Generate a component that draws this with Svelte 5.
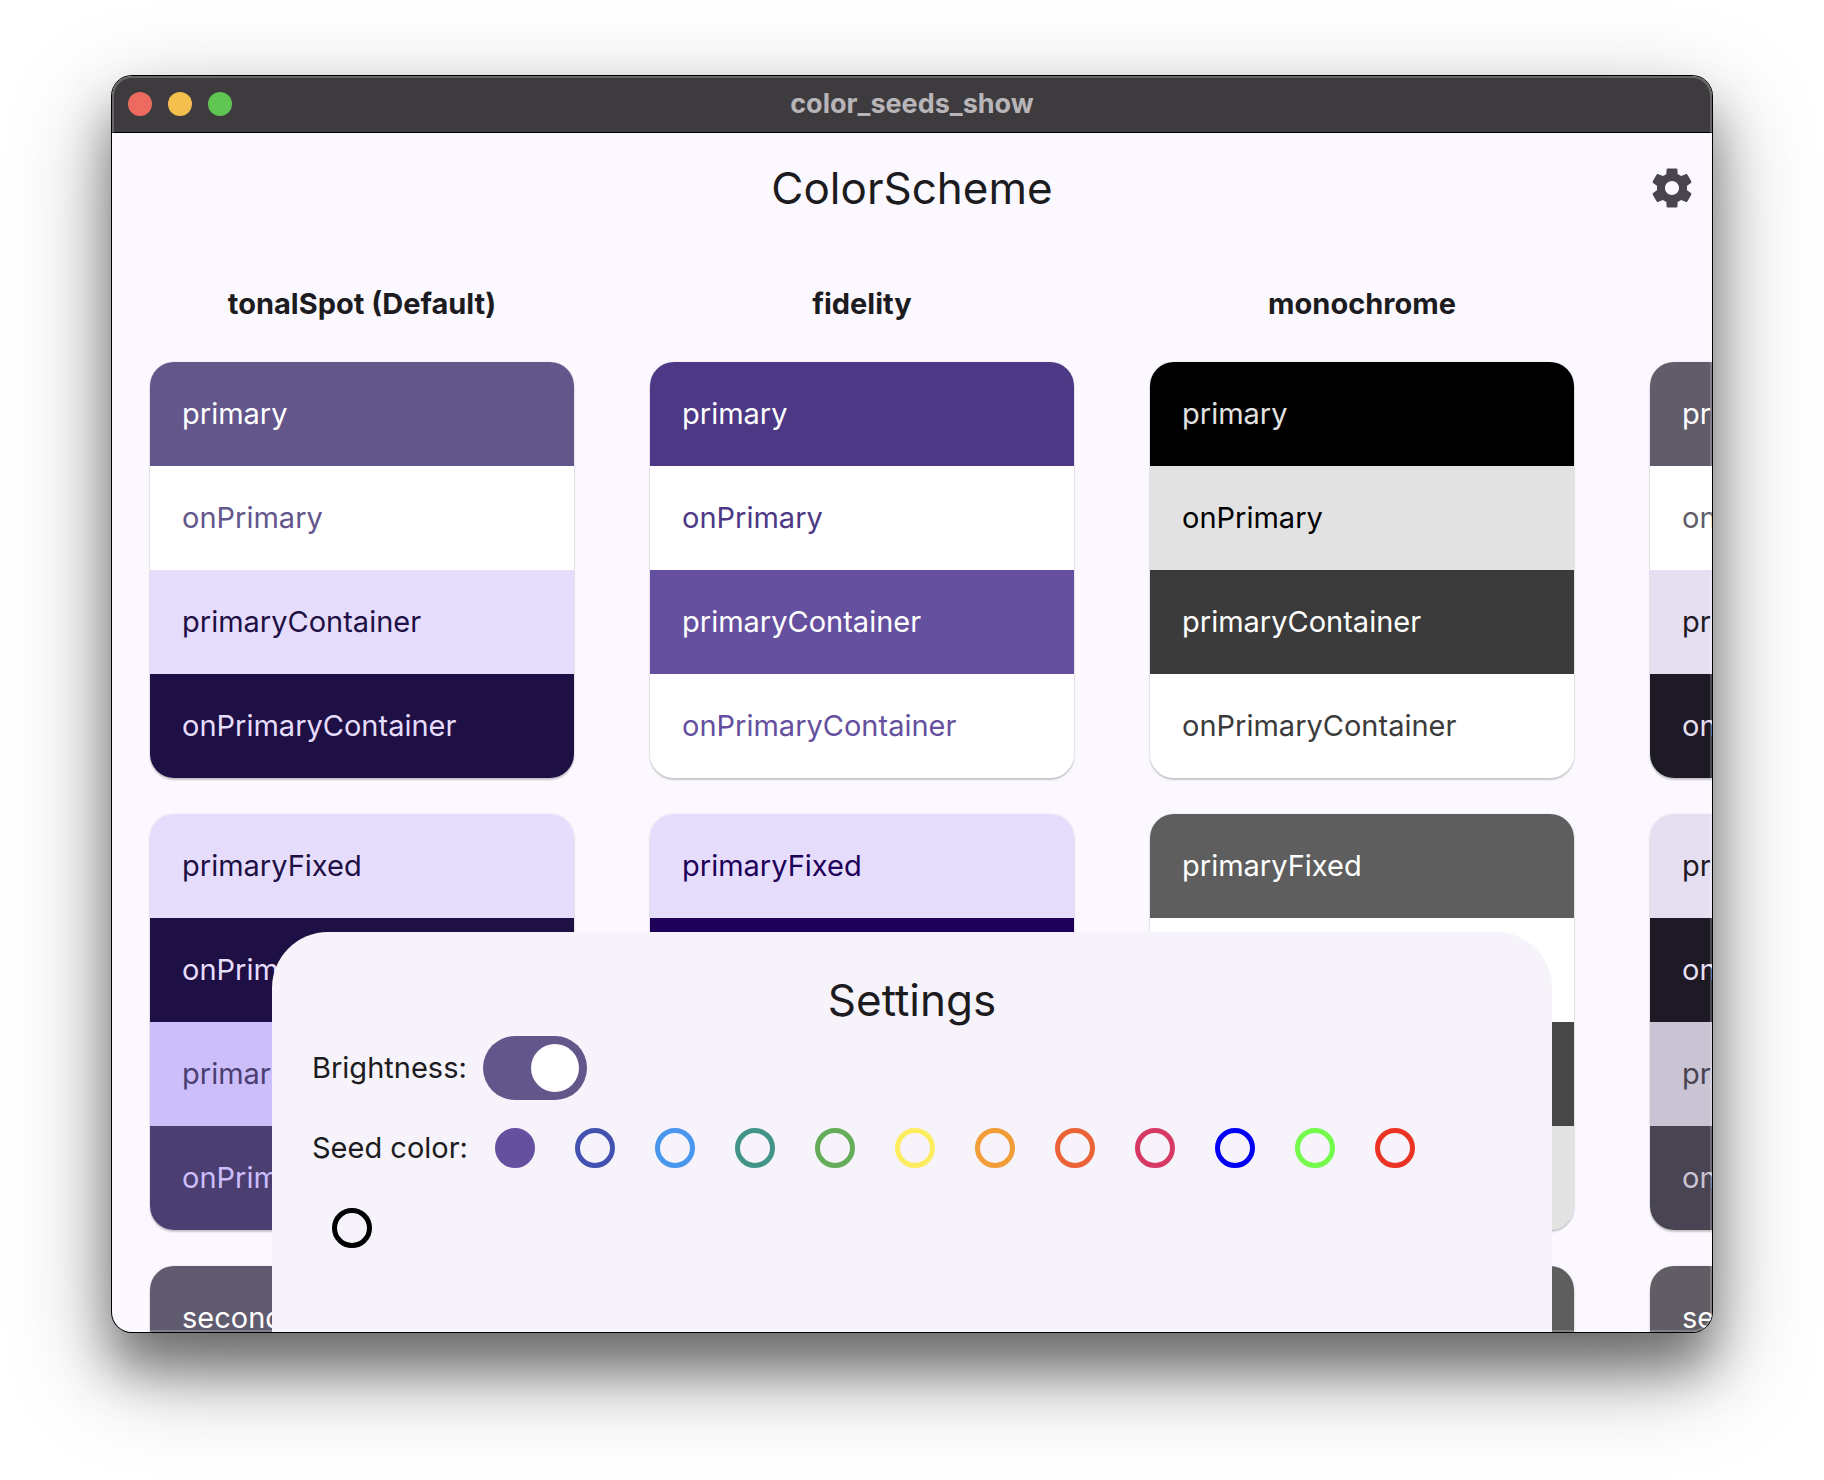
<script>
  const roles = ['primary', 'onPrimary', 'primaryContainer', 'onPrimaryContainer'];
  const fixedRoles = ['primaryFixed', 'onPrimaryFixed', 'primaryFixedDim', 'onPrimaryFixedVariant'];
  const secondaryRoles = ['secondary', 'onSecondary', 'secondaryContainer', 'onSecondaryContainer'];

  const group = (names, pairs) => names.map((name, i) => ({ name, bg: pairs[i][0], fg: pairs[i][1] }));

  const schemes = [
    {
      title: 'tonalSpot (Default)',
      groups: [
        group(roles, [['#63568b', '#ffffff'], ['#ffffff', '#63568b'], ['#e6ddfd', '#1e1044'], ['#1e1044', '#e6ddfd']]),
        group(fixedRoles, [['#e6ddfd', '#1e1044'], ['#1e1044', '#e6ddfd'], ['#ccbefa', '#4b3f71'], ['#4b3f71', '#ccbefa']]),
        group(secondaryRoles, [['#615b70', '#ffffff'], ['#ffffff', '#615b70'], ['#e7def8', '#1d192b'], ['#1d192b', '#e7def8']])
      ]
    },
    {
      title: 'fidelity',
      groups: [
        group(roles, [['#4c3885', '#ffffff'], ['#ffffff', '#4c3885'], ['#64509e', '#ffffff'], ['#ffffff', '#64509e']]),
        group(fixedRoles, [['#e6ddfd', '#1e0058'], ['#1e0058', '#e6ddfd'], ['#ccbdff', '#4b3784'], ['#4b3784', '#ccbdff']]),
        group(secondaryRoles, [['#615789', '#ffffff'], ['#ffffff', '#615789'], ['#d5c8ff', '#41376a'], ['#41376a', '#d5c8ff']])
      ]
    },
    {
      title: 'monochrome',
      groups: [
        group(roles, [['#000000', '#e2e2e2'], ['#e2e2e2', '#000000'], ['#3b3b3b', '#ffffff'], ['#ffffff', '#3b3b3b']]),
        group(fixedRoles, [['#5e5e5e', '#ffffff'], ['#ffffff', '#5e5e5e'], ['#474747', '#e2e2e2'], ['#e2e2e2', '#474747']]),
        group(secondaryRoles, [['#5e5e5e', '#ffffff'], ['#ffffff', '#5e5e5e'], ['#d5d5d5', '#1b1b1b'], ['#1b1b1b', '#d5d5d5']])
      ]
    },
    {
      title: 'neutral',
      groups: [
        group(roles, [['#605c6a', '#ffffff'], ['#ffffff', '#605c6a'], ['#e6dff1', '#1d1a26'], ['#1d1a26', '#e6dff1']]),
        group(fixedRoles, [['#e6dff1', '#1d1a26'], ['#1d1a26', '#e6dff1'], ['#cac3d4', '#484452'], ['#484452', '#cac3d4']]),
        group(secondaryRoles, [['#605d64', '#ffffff'], ['#ffffff', '#605d64'], ['#e6e0e9', '#1d1b20'], ['#1d1b20', '#e6e0e9']])
      ]
    }
  ];

  const seeds = [
    ['M3 baseline', '#64509e'],
    ['Indigo', '#4352b0'],
    ['Blue', '#4896ee'],
    ['Teal', '#429488'],
    ['Green', '#65ad5b'],
    ['Yellow', '#fdec60'],
    ['Orange', '#f29d38'],
    ['Deep orange', '#ec6337'],
    ['Pink', '#d73965'],
    ['Bright blue', '#0000f5'],
    ['Bright green', '#75fb4c'],
    ['Bright red', '#ea3323'],
    ['Black', '#000000']
  ];

  let seed = $state('#64509e');
  let light = $state(true);
  let sheetOpen = $state(true);
</script>

<div class="desktop">
  <div class="window">
    <header class="titlebar">
      <div class="lights">
        <button class="light close" aria-label="Close"></button>
        <button class="light minimize" aria-label="Minimize"></button>
        <button class="light zoom" aria-label="Zoom"></button>
      </div>
      <span class="window-title">color_seeds_show</span>
    </header>

    <div class="appbar">
      <h1>ColorScheme</h1>
      <button class="icon-button" aria-label="Settings" onclick={() => (sheetOpen = !sheetOpen)}>
        <svg viewBox="0 0 24 24" width="48" height="48" aria-hidden="true">
          <path d="M19.43 12.98c.04-.32.07-.64.07-.98s-.03-.66-.07-.98l2.11-1.65c.19-.15.24-.42.12-.64l-2-3.46c-.12-.22-.39-.3-.61-.22l-2.49 1c-.52-.4-1.08-.73-1.69-.98l-.19-2.47c-.02-.2-.18-.35-.38-.35h-4.6c-.2 0-.36.15-.38.35l-.19 2.47c-.61.25-1.17.59-1.69.98l-2.49-1c-.23-.09-.49 0-.61.22l-2 3.46c-.13.22-.07.49.12.64l2.11 1.65c-.04.32-.07.65-.07.98s.03.66.07.98l-2.11 1.65c-.19.15-.24.42-.12.64l2 3.46c.12.22.39.3.61.22l2.49-1c.52.4 1.08.73 1.69.98l.19 2.47c.02.2.18.35.38.35h4.6c.2 0 .36-.15.38-.35l.19-2.47c.61-.25 1.17-.59 1.69-.98l2.49 1c.23.09.49 0 .61-.22l2-3.46c.12-.22.07-.49-.12-.64l-2.11-1.65zM12 15.5c-1.93 0-3.5-1.57-3.5-3.5s1.57-3.5 3.5-3.5 3.5 1.57 3.5 3.5-1.57 3.5-3.5 3.5z" />
        </svg>
      </button>
    </div>

    <main class="columns">
      {#each schemes as scheme}
        <section class="column">
          <h2>{scheme.title}</h2>
          {#each scheme.groups as rows}
            <ul class="card">
              {#each rows as row}
                <li style="background: {row.bg}; color: {row.fg}">{row.name}</li>
              {/each}
            </ul>
          {/each}
        </section>
      {/each}
    </main>

    {#if sheetOpen}
      <section class="sheet" aria-labelledby="sheet-title">
        <h2 id="sheet-title">Settings</h2>
        <div class="setting">
          <label class="name" for="brightness">Brightness:</label>
          <input id="brightness" class="switch" type="checkbox" role="switch" bind:checked={light} />
        </div>
        <div class="setting" role="radiogroup" aria-labelledby="seed-label">
          <span class="name" id="seed-label">Seed color:</span>
          {#each seeds as [name, color]}
            <label class="seed" style="color: {color}">
              <input type="radio" name="seed" value={color} aria-label={name} bind:group={seed} />
            </label>
          {/each}
        </div>
      </section>
    {/if}
  </div>
</div>

<style>
  :global(body) {
    background: #ffffff;
  }

  .desktop {
    box-sizing: border-box;
    height: 100vh;
    padding: 76px 112px 148px;
    overflow: hidden;
    font-family: Inter, 'Liberation Sans', sans-serif;
    color: #1c1b20;
  }

  .window {
    position: relative;
    display: flex;
    flex-direction: column;
    height: 100%;
    overflow: hidden;
    border-radius: 20px;
    background: #fbf8ff;
    box-shadow:
      0 0 0 1px #000000,
      0 36px 100px rgba(0, 0, 0, 0.36),
      0 36px 50px rgba(0, 0, 0, 0.4);
  }

  /* Thin highlight inside the window edge */
  .window::after {
    content: '';
    position: absolute;
    inset: 0;
    border-radius: 20px;
    box-shadow: inset 0 0 0 2px rgba(255, 255, 255, 0.22);
    pointer-events: none;
  }

  .titlebar {
    flex: none;
    box-sizing: border-box;
    display: grid;
    grid-template-columns: 1fr auto 1fr;
    align-items: center;
    height: 57px;
    padding: 0 16px;
    border-bottom: 1px solid #000000;
    background: #3e3b3e;
  }

  .lights {
    display: flex;
    gap: 16px;
  }

  .light {
    width: 24px;
    height: 24px;
    padding: 0;
    border: 0;
    border-radius: 50%;
  }

  .close {
    background: #ed6a5e;
  }

  .minimize {
    background: #f5bf4f;
  }

  .zoom {
    background: #61c554;
  }

  .window-title {
    font-size: 27px;
    font-weight: 700;
    line-height: 32px;
    color: #b8b5b8;
  }

  .appbar {
    flex: none;
    display: grid;
    grid-template-columns: 1fr auto 1fr;
    align-items: center;
    height: 110px;
  }

  h1,
  .sheet h2 {
    margin: 0;
    font-size: 44px;
    font-weight: 400;
    line-height: 56px;
    text-align: center;
  }

  h1 {
    grid-column: 2;
  }

  .icon-button {
    display: grid;
    place-items: center;
    justify-self: end;
    width: 80px;
    height: 80px;
    padding: 0;
    border: 0;
    background: none;
    color: #49454f;
  }

  .icon-button svg {
    fill: currentColor;
  }

  .columns {
    flex: 1;
    display: flex;
    min-height: 0;
    overflow: hidden;
  }

  .column {
    flex: none;
    display: flex;
    flex-direction: column;
    gap: 36px;
    box-sizing: border-box;
    width: 500px;
    padding: 41px 38px;
  }

  .column h2 {
    margin: 0;
    padding-bottom: 2px;
    font-size: 29px;
    font-weight: 700;
    line-height: 40px;
    text-align: center;
  }

  .card {
    flex: none;
    margin: 0;
    padding: 0;
    overflow: hidden;
    border-radius: 24px;
    list-style: none;
    box-shadow:
      0 2px 2px rgba(0, 0, 0, 0.2),
      0 0 2px rgba(0, 0, 0, 0.14);
  }

  .card li {
    padding: 32px;
    font-size: 29px;
    line-height: 40px;
    white-space: nowrap;
  }

  /* Bottom sheet lying over the columns */
  .sheet {
    position: absolute;
    bottom: 0;
    left: 50%;
    box-sizing: border-box;
    width: 80%;
    height: 400px;
    padding: 40px;
    transform: translateX(-50%);
    border-radius: 56px 56px 0 0;
    background: #f6f3fa;
  }

  .setting {
    display: flex;
    flex-wrap: wrap;
    align-items: center;
    min-height: 80px;
  }

  .name {
    flex: none;
    width: 163px;
    font-size: 29px;
    line-height: 40px;
    white-space: nowrap;
  }

  .switch {
    appearance: none;
    display: flex;
    box-sizing: border-box;
    width: 104px;
    height: 64px;
    margin: 0 8px;
    padding: 8px;
    border-radius: 32px;
    background: #79757f;
  }

  .switch::before {
    content: '';
    width: 48px;
    height: 48px;
    border-radius: 50%;
    background: #ffffff;
  }

  .switch:checked {
    justify-content: flex-end;
    background: #63568b;
  }

  .seed {
    flex: none;
    display: grid;
    place-items: center;
    width: 80px;
    height: 80px;
  }

  .seed input {
    appearance: none;
    box-sizing: border-box;
    width: 40px;
    height: 40px;
    margin: 0;
    border: 5px solid currentColor;
    border-radius: 50%;
    color: inherit;
  }

  .seed input:checked {
    background: currentColor;
  }
</style>
